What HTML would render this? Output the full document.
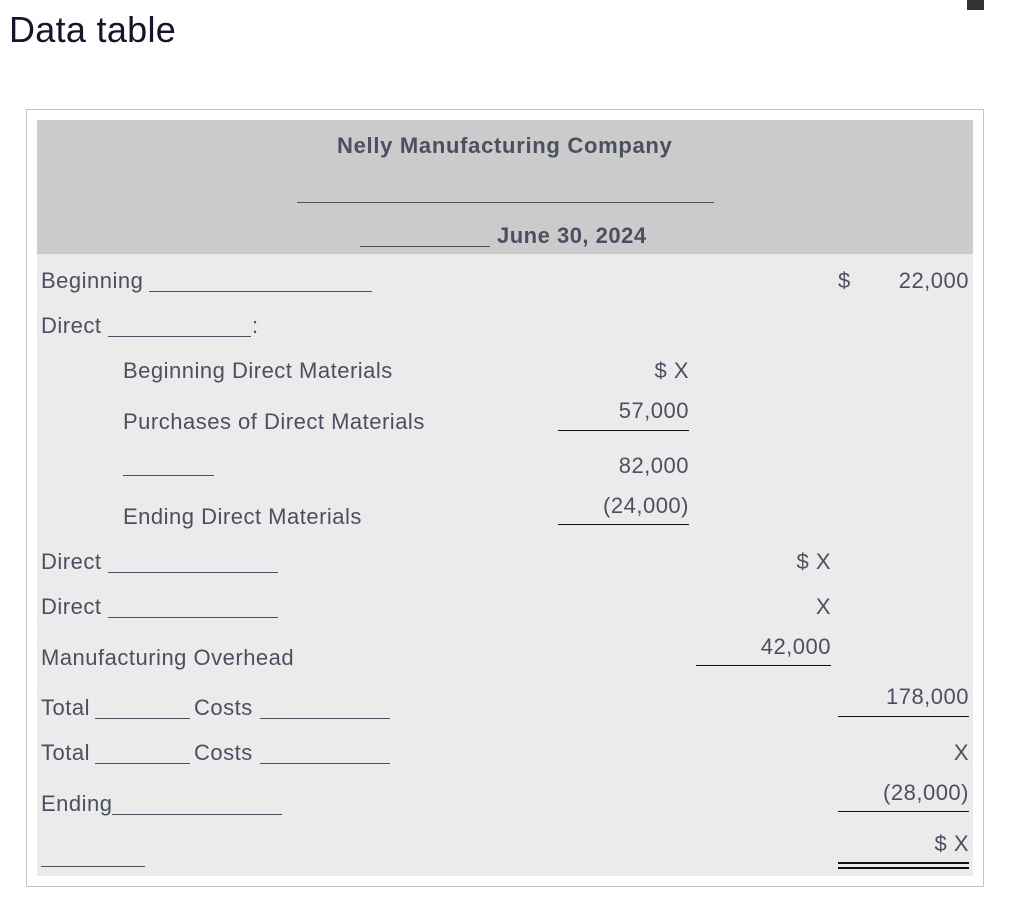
<!DOCTYPE html>
<html><head><meta charset="utf-8"><style>
body{margin:0;width:1020px;height:914px;background:#fff;position:relative;font-family:"Liberation Sans",Arial,sans-serif;overflow:hidden}
.t{position:absolute;font-size:22px;letter-spacing:0.5px;line-height:24px;color:#4b5060;white-space:nowrap}
.r{text-align:right}
.l{position:absolute;height:0;border-top:1.5px solid #4b5060}
.k{position:absolute;height:0;border-top:1.5px solid #111}
</style></head><body>
<div style="position:absolute;left:9px;top:9px;font-size:36px;color:#14142b;letter-spacing:0.3px">Data table</div>
<div style="position:absolute;left:967px;top:0;width:17px;height:10px;background:#333"></div>
<div style="position:absolute;left:26px;top:109px;width:956px;height:776px;border:1px solid #c4c4c4"></div>
<div style="position:absolute;left:37px;top:120px;width:936px;height:134px;background:#cbcbcb"></div>
<div style="position:absolute;left:37px;top:254px;width:936px;height:622px;background:#ebebeb"></div>

<div class="t" style="left:337px;top:134px;font-weight:bold;letter-spacing:0.7px">Nelly Manufacturing Company</div>
<div class="l" style="left:297px;top:202px;width:417px"></div>
<div class="l" style="left:360px;top:246px;width:130px"></div>
<div class="t" style="left:497px;top:224px;font-weight:bold">June 30, 2024</div>

<div class="t" style="left:41px;top:269px">Beginning</div>
<div class="l" style="left:149px;top:291px;width:223px"></div>
<div class="t" style="left:838px;top:269px">$</div>
<div class="t r" style="right:51px;top:269px">22,000</div>

<div class="t" style="left:41px;top:314px">Direct</div>
<div class="l" style="left:108px;top:336px;width:143px"></div>
<div class="t" style="left:252px;top:314px">:</div>

<div class="t" style="left:123px;top:359px">Beginning Direct Materials</div>
<div class="t r" style="right:331px;top:359px">$ X</div>
<div class="t" style="left:123px;top:410px">Purchases of Direct Materials</div>
<div class="t r" style="right:331px;top:399px">57,000</div>
<div class="k" style="left:558px;top:430px;width:131px"></div>
<div class="l" style="left:123px;top:475px;width:91px"></div>
<div class="t r" style="right:331px;top:454px">82,000</div>
<div class="t" style="left:123px;top:505px">Ending Direct Materials</div>
<div class="t r" style="right:331px;top:494px">(24,000)</div>
<div class="k" style="left:558px;top:524px;width:131px"></div>

<div class="t" style="left:41px;top:550px">Direct</div>
<div class="l" style="left:108px;top:572px;width:170px"></div>
<div class="t r" style="right:189px;top:550px">$ X</div>
<div class="t" style="left:41px;top:595px">Direct</div>
<div class="l" style="left:108px;top:617px;width:170px"></div>
<div class="t r" style="right:189px;top:595px">X</div>
<div class="t" style="left:41px;top:646px">Manufacturing Overhead</div>
<div class="t r" style="right:189px;top:635px">42,000</div>
<div class="k" style="left:696px;top:665px;width:135px"></div>

<div class="t" style="left:41px;top:696px">Total</div>
<div class="l" style="left:95px;top:718px;width:95px"></div>
<div class="t" style="left:194px;top:696px">Costs</div>
<div class="l" style="left:260px;top:718px;width:130px"></div>
<div class="t r" style="right:51px;top:685px">178,000</div>
<div class="k" style="left:838px;top:716px;width:131px"></div>

<div class="t" style="left:41px;top:741px">Total</div>
<div class="l" style="left:95px;top:763px;width:95px"></div>
<div class="t" style="left:194px;top:741px">Costs</div>
<div class="l" style="left:260px;top:763px;width:130px"></div>
<div class="t r" style="right:51px;top:741px">X</div>

<div class="t" style="left:41px;top:792px">Ending</div>
<div class="l" style="left:112px;top:814px;width:170px"></div>
<div class="t r" style="right:51px;top:781px">(28,000)</div>
<div class="k" style="left:838px;top:811px;width:131px"></div>
<div class="t r" style="right:51px;top:832px">$ X</div>
<div class="k" style="left:838px;top:862px;width:131px;border-top-width:2px"></div>
<div class="k" style="left:838px;top:867px;width:131px;border-top-width:2px"></div>
<div class="l" style="left:41px;top:866px;width:104px"></div>
</body></html>
